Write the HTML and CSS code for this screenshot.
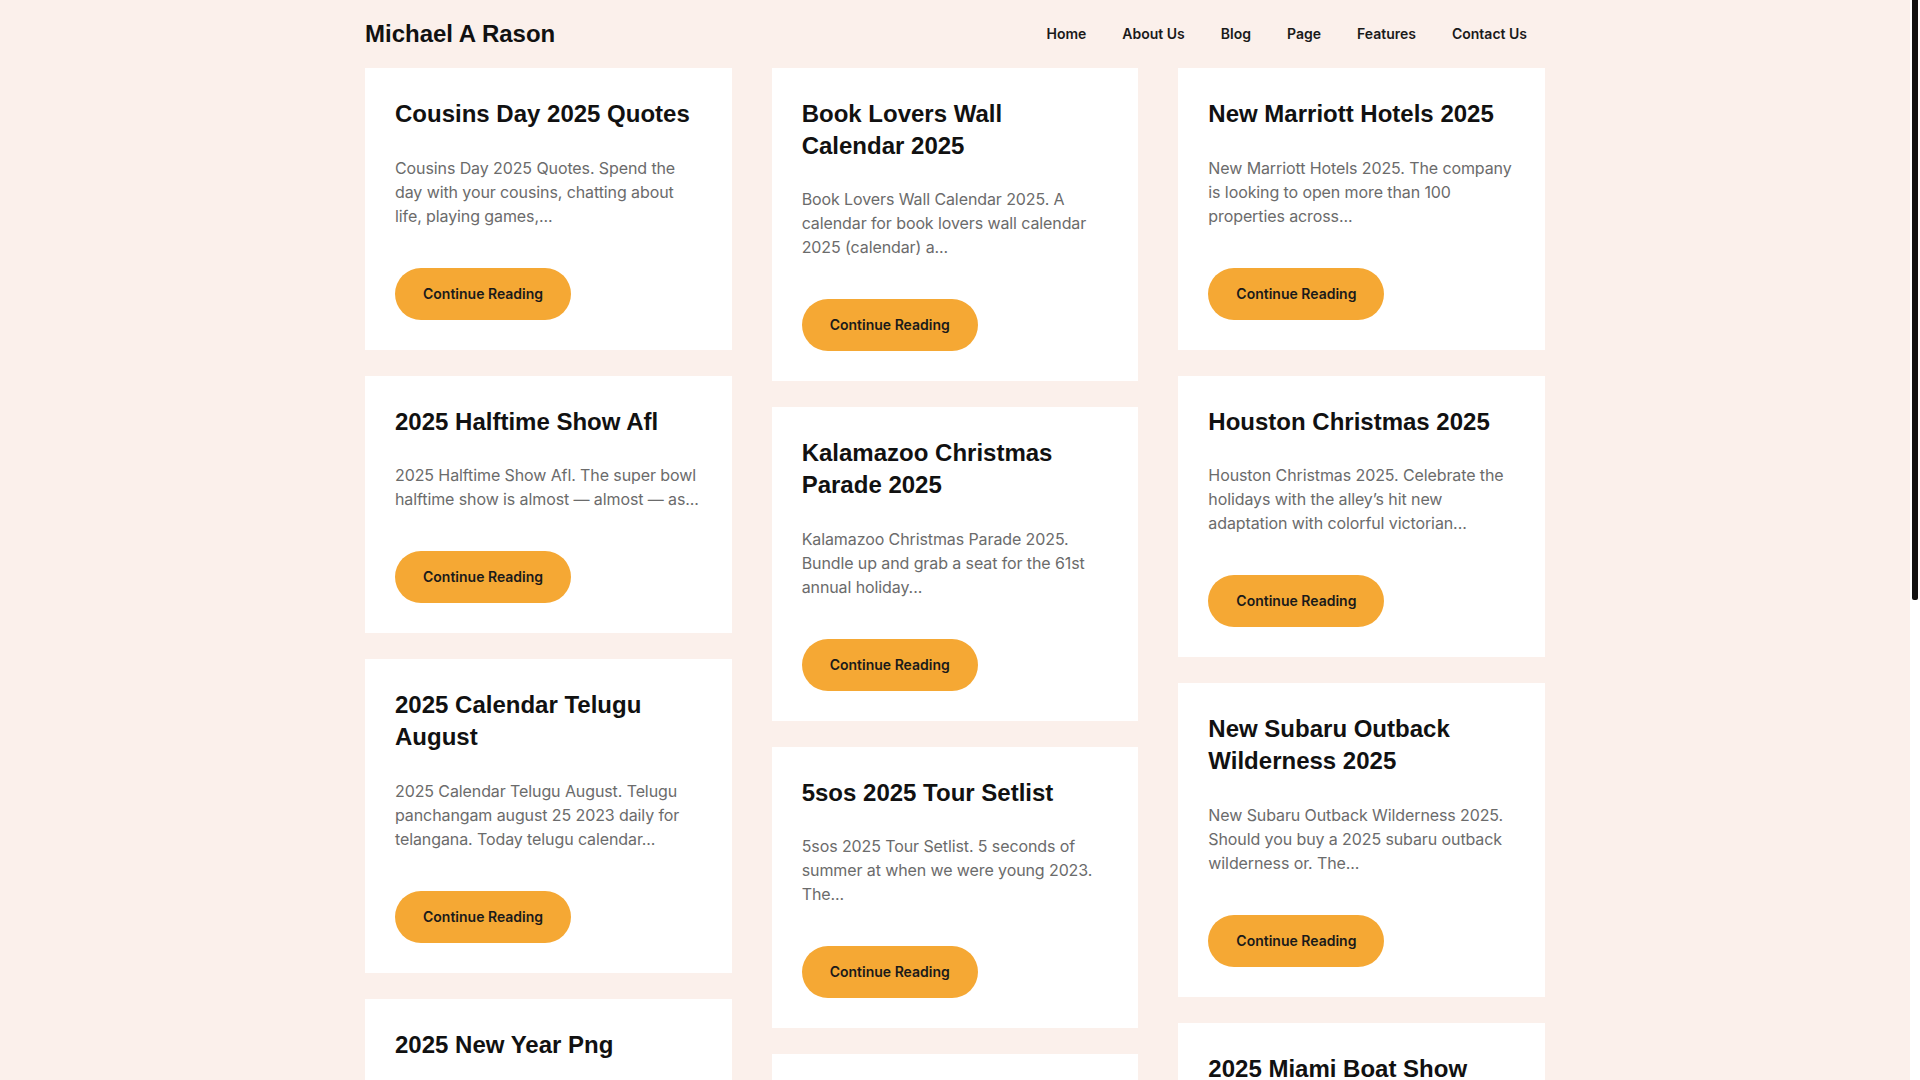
FILE: index.html
```html
<!DOCTYPE html>
<html lang="en">
<head>
    <meta charset="UTF-8">
    <meta name="viewport" content="width=device-width, initial-scale=1.0">
    <title>Michael A Rason</title>
    <link rel="stylesheet" href="styles.css">
</head>
<body>
    <div class="container">
        <header class="site-header">
            <a class="site-title" href="#">Michael A Rason</a>
            <nav>
                <ul class="menu">
                    <li><a href="#">Home</a></li>
                    <li><a href="#">About Us</a></li>
                    <li><a href="#">Blog</a></li>
                    <li><a href="#">Page</a></li>
                    <li><a href="#">Features</a></li>
                    <li><a href="#">Contact Us</a></li>
                </ul>
            </nav>
        </header>

        <main class="posts">
            <div class="post-col">
                <article class="post">
                    <h2 class="post-title"><a href="#">Cousins Day 2025 Quotes</a></h2>
                    <p class="excerpt">Cousins Day 2025 Quotes. Spend the day with your cousins, chatting about life, playing games,...</p>
                    <a class="read-more" href="#">Continue Reading</a>
                </article>
                <article class="post">
                    <h2 class="post-title"><a href="#">2025 Halftime Show Afl</a></h2>
                    <p class="excerpt">2025 Halftime Show Afl. The super bowl halftime show is almost — almost — as...</p>
                    <a class="read-more" href="#">Continue Reading</a>
                </article>
                <article class="post">
                    <h2 class="post-title"><a href="#">2025 Calendar Telugu August</a></h2>
                    <p class="excerpt">2025 Calendar Telugu August. Telugu panchangam august 25 2023 daily for telangana. Today telugu calendar...</p>
                    <a class="read-more" href="#">Continue Reading</a>
                </article>
                <article class="post">
                    <h2 class="post-title"><a href="#">2025 New Year Png</a></h2>
                    <p class="excerpt">2025 New Year Png. Download free new year images with transparent background for your...</p>
                    <a class="read-more" href="#">Continue Reading</a>
                </article>
                <article class="post">
                    <h2 class="post-title"><a href="#">2025 Toyota Sequoia Colors</a></h2>
                    <p class="excerpt">2025 Toyota Sequoia Colors. See all the exterior and interior color options for the new...</p>
                    <a class="read-more" href="#">Continue Reading</a>
                </article>
                <article class="post">
                    <h2 class="post-title"><a href="#">Easter 2025 Date Uk</a></h2>
                    <p class="excerpt">Easter 2025 Date Uk. Find out when easter sunday falls this year and the bank holidays...</p>
                    <a class="read-more" href="#">Continue Reading</a>
                </article>
            </div>

            <div class="post-col">
                <article class="post">
                    <h2 class="post-title"><a href="#">Book Lovers Wall Calendar 2025</a></h2>
                    <p class="excerpt">Book Lovers Wall Calendar 2025. A calendar for book lovers wall calendar 2025 (calendar) a...</p>
                    <a class="read-more" href="#">Continue Reading</a>
                </article>
                <article class="post">
                    <h2 class="post-title"><a href="#">Kalamazoo Christmas Parade 2025</a></h2>
                    <p class="excerpt">Kalamazoo Christmas Parade 2025. Bundle up and grab a seat for the 61st annual holiday...</p>
                    <a class="read-more" href="#">Continue Reading</a>
                </article>
                <article class="post">
                    <h2 class="post-title"><a href="#">5sos 2025 Tour Setlist</a></h2>
                    <p class="excerpt">5sos 2025 Tour Setlist. 5 seconds of summer at when we were young 2023. The...</p>
                    <a class="read-more" href="#">Continue Reading</a>
                </article>
                <article class="post">
                    <h2 class="post-title"><a href="#">2025 Chevy Tahoe Redesign</a></h2>
                    <p class="excerpt">2025 Chevy Tahoe Redesign. The full size suv is getting a fresh look and updated tech...</p>
                    <a class="read-more" href="#">Continue Reading</a>
                </article>
                <article class="post">
                    <h2 class="post-title"><a href="#">March Madness 2025 Dates</a></h2>
                    <p class="excerpt">March Madness 2025 Dates. Selection sunday, the first four and the final four...</p>
                    <a class="read-more" href="#">Continue Reading</a>
                </article>
            </div>

            <div class="post-col">
                <article class="post">
                    <h2 class="post-title"><a href="#">New Marriott Hotels 2025</a></h2>
                    <p class="excerpt">New Marriott Hotels 2025. The company is looking to open more than 100 properties across...</p>
                    <a class="read-more" href="#">Continue Reading</a>
                </article>
                <article class="post">
                    <h2 class="post-title"><a href="#">Houston Christmas 2025</a></h2>
                    <p class="excerpt">Houston Christmas 2025. Celebrate the holidays with the alley’s hit new adaptation with colorful victorian...</p>
                    <a class="read-more" href="#">Continue Reading</a>
                </article>
                <article class="post">
                    <h2 class="post-title"><a href="#">New Subaru Outback Wilderness 2025</a></h2>
                    <p class="excerpt">New Subaru Outback Wilderness 2025. Should you buy a 2025 subaru outback wilderness or. The...</p>
                    <a class="read-more" href="#">Continue Reading</a>
                </article>
                <article class="post">
                    <h2 class="post-title"><a href="#">2025 Miami Boat Show</a></h2>
                    <p class="excerpt">2025 Miami Boat Show. Tickets, dates and everything you need to know before you go...</p>
                    <a class="read-more" href="#">Continue Reading</a>
                </article>
                <article class="post">
                    <h2 class="post-title"><a href="#">Ramadan 2025 Calendar</a></h2>
                    <p class="excerpt">Ramadan 2025 Calendar. Sehri and iftar timings for every day of the holy month...</p>
                    <a class="read-more" href="#">Continue Reading</a>
                </article>
            </div>
        </main>
    </div>

    <!-- window scrollbar as it shows in the browser -->
    <div class="scroll-track"><div class="scroll-thumb"></div></div>
</body>
</html>
```

FILE: styles.css
```css
body {
  margin: 0;
  padding-right: 10px;
  background-color: #fbf0eb;
  font-family: Inter, "Noto Sans", sans-serif;
  color: #1a1a1a;
}

a {
  color: inherit;
  text-decoration: none;
}

.container {
  width: 1180px;
  margin: 0 auto;
  padding-bottom: 50px;
}

.site-header {
  height: 68px;
  display: flex;
  align-items: center;
  justify-content: space-between;
}

.site-title {
  font-family: "Liberation Sans", Arial, sans-serif;
  font-weight: 700;
  font-size: 24px;
  color: #111;
}

.menu {
  list-style: none;
  margin: 0;
  padding: 0;
  display: flex;
}

.menu a {
  display: block;
  padding: 0 18px;
  font-size: 14px;
  font-weight: 600;
  line-height: 68px;
}

.posts {
  display: flex;
  gap: 40px;
  align-items: flex-start;
}

.post-col {
  flex: 1;
  min-width: 0;
  display: flex;
  flex-direction: column;
  gap: 26px;
}

.post {
  background-color: #fff;
  padding: 30px;
}

.post-title {
  margin: 0 0 26px;
  font-family: "Liberation Sans", Arial, sans-serif;
  font-size: 24px;
  font-weight: 700;
  line-height: 1.32;
  color: #111;
}

.excerpt {
  margin: 0 0 40px;
  font-size: 16px;
  line-height: 24px;
  letter-spacing: -0.1px;
  color: #6b6b6b;
}

.read-more {
  display: inline-block;
  height: 52px;
  line-height: 52px;
  padding: 0 28px;
  border-radius: 26px;
  background-color: #f5a834;
  font-size: 14px;
  font-weight: 600;
  color: #1a1a1a;
}

.scroll-track {
  position: fixed;
  top: 0;
  right: 0;
  width: 10px;
  height: 100vh;
  background-color: #fff;
}

.scroll-thumb {
  width: 6px;
  height: 600px;
  margin-left: 2px;
  border-radius: 0 0 2px 2px;
  background-color: #111;
}
```
